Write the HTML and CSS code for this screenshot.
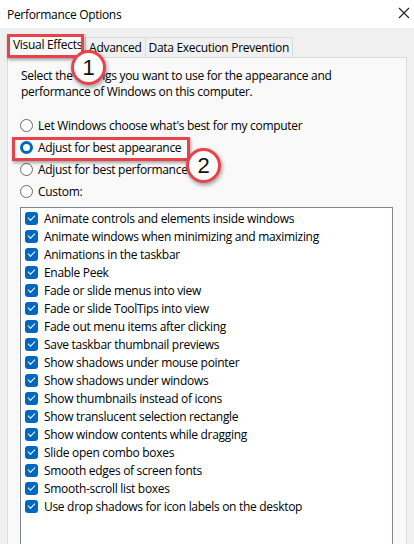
FILE: index.html
```html
<!DOCTYPE html>
<html>
<head>
<meta charset="utf-8">
<link rel="stylesheet" href="styles.css">
</head>
<body>
<div class="window">
  <div class="titlebar">
    <span class="title">Performance Options</span>
    <svg class="close" width="12" height="12" viewBox="0 0 12 12"><path d="M1 1L11 11M11 1L1 11" stroke="#222" stroke-width="1.1"/></svg>
  </div>
  <div class="tabs">
    <div class="tab active">Visual Effects</div>
    <div class="tab">Advanced</div>
    <div class="tab">Data Execution Prevention</div>
  </div>
  <div class="panel">
    <p class="desc">Select the settings you want to use for the appearance and<br>performance of Windows on this computer.</p>
    <div class="radios">
      <label class="radio"><span class="rb"></span>Let Windows choose what's best for my computer</label>
      <label class="radio"><span class="rb on"></span>Adjust for best appearance</label>
      <label class="radio"><span class="rb"></span>Adjust for best performance</label>
      <label class="radio"><span class="rb"></span>Custom:</label>
    </div>
    <div class="listbox">
      <div class="item"><span class="cb"></span>Animate controls and elements inside windows</div>
      <div class="item"><span class="cb"></span>Animate windows when minimizing and maximizing</div>
      <div class="item"><span class="cb"></span>Animations in the taskbar</div>
      <div class="item"><span class="cb"></span>Enable Peek</div>
      <div class="item"><span class="cb"></span>Fade or slide menus into view</div>
      <div class="item"><span class="cb"></span>Fade or slide ToolTips into view</div>
      <div class="item"><span class="cb"></span>Fade out menu items after clicking</div>
      <div class="item"><span class="cb"></span>Save taskbar thumbnail previews</div>
      <div class="item"><span class="cb"></span>Show shadows under mouse pointer</div>
      <div class="item"><span class="cb"></span>Show shadows under windows</div>
      <div class="item"><span class="cb"></span>Show thumbnails instead of icons</div>
      <div class="item"><span class="cb"></span>Show translucent selection rectangle</div>
      <div class="item"><span class="cb"></span>Show window contents while dragging</div>
      <div class="item"><span class="cb"></span>Slide open combo boxes</div>
      <div class="item"><span class="cb"></span>Smooth edges of screen fonts</div>
      <div class="item"><span class="cb"></span>Smooth-scroll list boxes</div>
      <div class="item"><span class="cb"></span>Use drop shadows for icon labels on the desktop</div>
    </div>
  </div>
  <div class="mark box1"></div>
  <div class="badge b1">1</div>
  <div class="mark box2"></div>
  <div class="badge b2">2</div>
</div>
</body>
</html>
```
FILE: styles.css
```css
html, body {
  margin: 0;
  padding: 0;
}
body {
  background: #f0f0f0;
  font-family: "Open Sans", "Noto Sans", sans-serif;
  font-size: 12px;
  letter-spacing: -0.3px;
  color: #000;
  width: 414px;
  height: 544px;
  overflow: hidden;
}
.window {
  position: relative;
  height: 544px;
  display: flex;
  flex-direction: column;
}
.titlebar {
  height: 28px;
  flex: none;
  background: #fff;
  display: flex;
  align-items: center;
  justify-content: space-between;
  padding: 0 4px 0 7px;
}
.close {
  margin-top: -2px;
}
.tabs {
  flex: none;
  display: flex;
  align-items: flex-end;
  padding: 0 0 0 9px;
  margin-top: 6px;
  height: 23px;
  position: relative;
  z-index: 1;
}
.tab {
  height: 19px;
  line-height: 19px;
  padding: 0 3px;
  background: #f0f0f0;
  border: 1px solid #dcdcdc;
  border-bottom: none;
  margin-left: -1px;
}
.tab.active {
  height: 23px;
  line-height: 20px;
  background: #f9f9f9;
  padding: 0 3px;
  margin-left: 0;
  margin-bottom: -1px;
}
.panel {
  flex: 1;
  min-height: 0;
  margin: 0 7px;
  border: 1px solid #dcdcdc;
  border-bottom: none;
  background: #f9f9f9;
  padding: 10px 13px 0 12px;
  display: flex;
  flex-direction: column;
}
.desc {
  margin: 0;
  line-height: 16px;
  padding-left: 1px;
}
.radios {
  margin-top: 14px;
  display: flex;
  flex-direction: column;
}
.radio {
  height: 22px;
  display: flex;
  align-items: center;
  gap: 5px;
}
.rb {
  width: 11px;
  height: 11px;
  border: 1px solid #6a6a6a;
  border-radius: 50%;
  background: #fff;
  flex: none;
}
.rb.on {
  width: 7px;
  height: 7px;
  border: 3px solid #0067c0;
}
.listbox {
  flex: 1;
  margin-top: 5px;
  width: 373px;
  border: 1px solid #828790;
  border-bottom: none;
  background: #fff;
  padding: 1px 0 0 4px;
  box-sizing: border-box;
}
.item {
  height: 18px;
  display: flex;
  align-items: center;
  gap: 6px;
}
.cb {
  width: 13px;
  height: 13px;
  border-radius: 3px;
  background: #0067c0;
  flex: none;
  position: relative;
}
.cb::after {
  content: "";
  position: absolute;
  left: 3px;
  top: 3px;
  width: 6px;
  height: 3px;
  border-left: 1px solid #fff;
  border-bottom: 1px solid #fff;
  transform: rotate(-45deg);
}
.mark {
  position: absolute;
  border: 3px solid #e8434b;
  box-shadow: 1px 2px 3px rgba(0,0,0,0.35);
  z-index: 2;
}
.box1 {
  left: 7px;
  top: 34px;
  width: 71px;
  height: 18px;
}
.box2 {
  left: 12px;
  top: 137px;
  width: 172px;
  height: 18px;
}
.badge {
  position: absolute;
  width: 29px;
  height: 29px;
  border: 3px solid #e8434b;
  border-radius: 50%;
  background: #fff;
  box-shadow: 1px 2px 4px rgba(0,0,0,0.4);
  z-index: 3;
  font-family: "Liberation Sans", sans-serif;
  font-size: 22px;
  letter-spacing: 0;
  line-height: 29px;
  text-align: center;
  color: #111;
}
.b1 {
  left: 71px;
  top: 50px;
}
.b2 {
  left: 186px;
  top: 148px;
}
```
